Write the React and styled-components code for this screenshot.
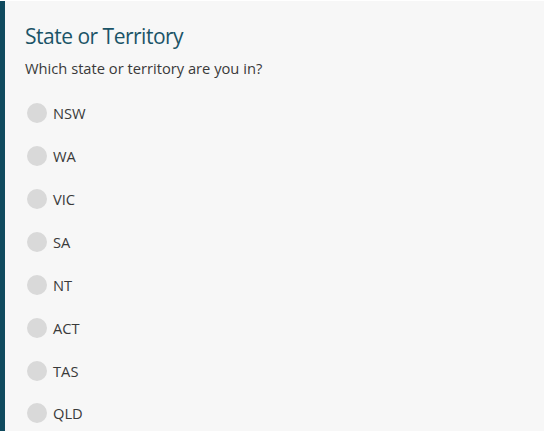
import React from 'react';
import styled, { createGlobalStyle } from 'styled-components';

const GlobalStyle = createGlobalStyle`
  html, body {
    margin: 0;
    padding: 0;
    background: #ffffff;
  }
  body {
    font-family: "Open Sans", "Liberation Sans", sans-serif;
  }
`;

const Panel = styled.section`
  width: 544px;
  margin-top: 1px;
  min-height: 430px;
  box-sizing: border-box;
  background: #f7f7f7;
  border-left: 5px solid #0f4a5e;
  padding: 20px 20px 0 20px;
`;

const Title = styled.h2`
  margin: 0;
  font-size: 21px;
  font-weight: 400;
  line-height: 30px;
  color: #1b5467;
  letter-spacing: -0.5px;
`;

const Question = styled.p`
  margin: 6px 0 13px;
  font-size: 14.7px;
  line-height: 22px;
  color: #3a3a3a;
`;

const Options = styled.div`
  display: flex;
  flex-direction: column;
`;

const Option = styled.label`
  display: flex;
  align-items: center;
  gap: 6px;
  height: 42.86px;
  padding-left: 2px;
  font-size: 14.7px;
  color: #3a3a3a;
  cursor: pointer;
`;

const HiddenInput = styled.input`
  position: absolute;
  opacity: 0;
  width: 0;
  height: 0;
`;

const Dot = styled.span`
  width: 20px;
  height: 20px;
  border-radius: 50%;
  background: ${p => (p.$checked ? '#1b5467' : '#d9d9d9')};
  flex-shrink: 0;
`;

const states = ['NSW', 'WA', 'VIC', 'SA', 'NT', 'ACT', 'TAS', 'QLD'];

export default function App() {
  const [value, setValue] = React.useState(null);
  return (
    <>
      <GlobalStyle />
      <Panel>
        <Title>State or Territory</Title>
        <Question>Which state or territory are you in?</Question>
        <Options>
          {states.map(s => (
            <Option key={s}>
              <HiddenInput
                type='radio'
                name='state'
                value={s}
                checked={value === s}
                onChange={() => setValue(s)}
              />
              <Dot $checked={value === s} />
              {s}
            </Option>
          ))}
        </Options>
      </Panel>
    </>
  );
}
